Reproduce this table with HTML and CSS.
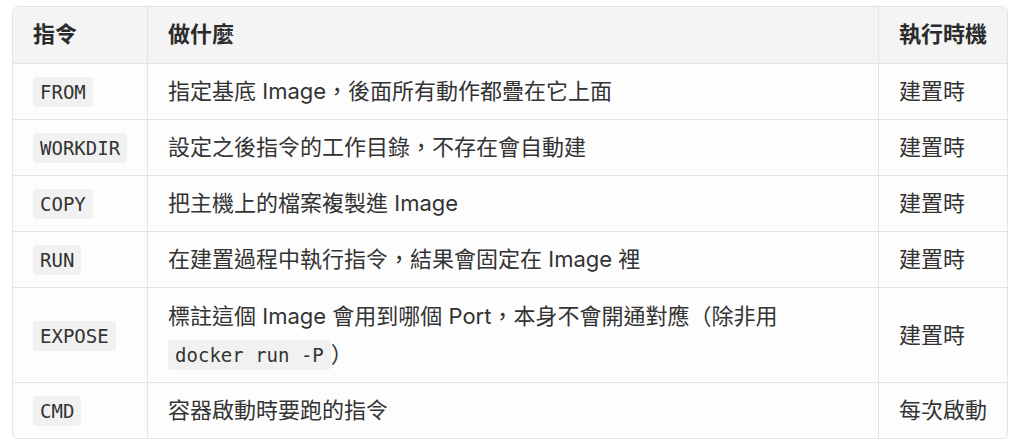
FILE: index.html
```html
<!DOCTYPE html>
<html lang="zh-Hant">
<head>
<meta charset="utf-8">
<link rel="stylesheet" href="styles.css">
</head>
<body>
<div class="table-wrap">
  <table class="cmd-table">
    <thead>
      <tr>
        <th class="col-cmd">指令</th>
        <th class="col-what">做什麼</th>
        <th class="col-when">執行時機</th>
      </tr>
    </thead>
    <tbody>
      <tr>
        <td><code>FROM</code></td>
        <td>指定基底 Image，後面所有動作都疊在它上面</td>
        <td>建置時</td>
      </tr>
      <tr>
        <td><code>WORKDIR</code></td>
        <td>設定之後指令的工作目錄，不存在會自動建</td>
        <td>建置時</td>
      </tr>
      <tr>
        <td><code>COPY</code></td>
        <td>把主機上的檔案複製進 Image</td>
        <td>建置時</td>
      </tr>
      <tr>
        <td><code>RUN</code></td>
        <td>在建置過程中執行指令，結果會固定在 Image 裡</td>
        <td>建置時</td>
      </tr>
      <tr>
        <td><code>EXPOSE</code></td>
        <td class="multi">標註這個 Image 會用到哪個 Port，本身不會開通對應（除非用 <code>docker run -P</code>）</td>
        <td>建置時</td>
      </tr>
      <tr>
        <td><code>CMD</code></td>
        <td>容器啟動時要跑的指令</td>
        <td>每次啟動</td>
      </tr>
    </tbody>
  </table>
</div>
</body>
</html>
```

FILE: styles.css
```css
html, body {
  background: #ffffff;
}

body {
  margin: 6px 16px 0 12px;
  font-family: "Inter", "Noto Sans CJK TC", "Noto Sans", sans-serif;
  font-size: 22px;
  color: #333333;
}

.table-wrap {
  width: 996px;
  border: 1px solid #e4e4e4;
  border-radius: 6px;
  overflow: hidden;
  box-sizing: border-box;
  background: #fdfdfd;
}

.cmd-table {
  width: 100%;
  border-collapse: collapse;
}

.cmd-table th,
.cmd-table td {
  padding: 9px 20px;
  line-height: 37px;
  text-align: left;
  vertical-align: middle;
  white-space: nowrap;
  border-left: 1px solid #e4e4e4;
  border-bottom: 1px solid #e4e4e4;
}

.cmd-table thead th {
  padding-bottom: 10px;
}

.cmd-table th:first-child,
.cmd-table td:first-child {
  border-left: none;
}

.cmd-table tbody tr:last-child td {
  border-bottom: none;
}

.cmd-table td.multi {
  line-height: 38px;
  white-space: normal;
}

.cmd-table thead th {
  background: #f4f4f4;
  font-weight: 700;
  color: #2b2b2b;
}

.col-cmd {
  width: 93px;
}

.col-when {
  width: 86px;
}

.cmd-table code {
  font-family: "DejaVu Sans Mono", "Liberation Mono", monospace;
  font-size: 19px;
  line-height: 1.2;
  background: #f1f1f1;
  color: #333333;
  padding: 4px 7px;
  border-radius: 4px;
  white-space: nowrap;
}
```
